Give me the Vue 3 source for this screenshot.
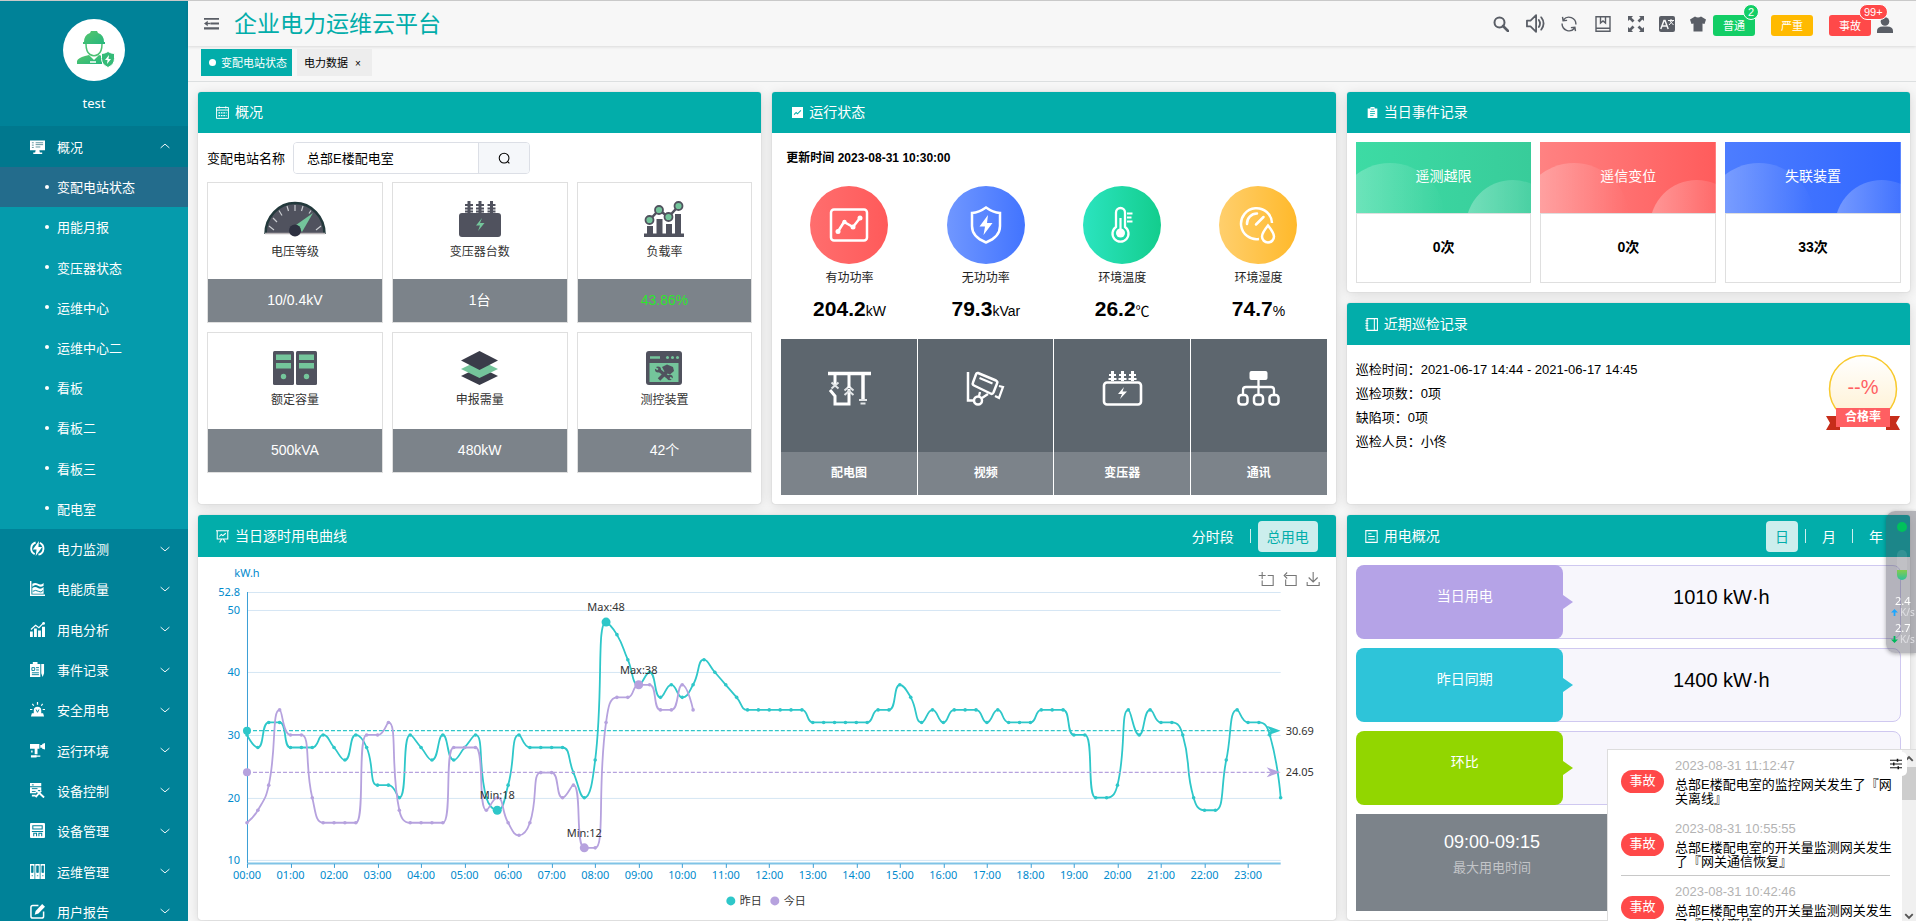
<script setup>
import { computed, ref } from 'vue'

const icons = {
  fold: '<path d="M0 2h16v2H0zM7 7h9v2H7zM0 12h16v2.500H0zM0 8l4-3v6z" fill="currentColor"/><path d="M3 8h4" stroke="currentColor" stroke-width="1.500"/>',
  search: '<circle cx="6.500" cy="6.500" r="5" fill="none" stroke="currentColor" stroke-width="2"/><path d="M10 10l5 5" stroke="currentColor" stroke-width="2.600" stroke-linecap="round"/>',
  lens: '<circle cx="7.500" cy="7.500" r="6" fill="none" stroke="currentColor" stroke-width="1.300"/><path d="M11.500 11.500l2.500 2.500" stroke="currentColor" stroke-width="1.300"/>',
  sound: '<path d="M.8 5.500h3L8.500 1v14l-4.700-4.500h-3z" fill="none" stroke="currentColor" stroke-width="1.500" stroke-linejoin="round"/><path d="M10.800 5q2 3 0 6M12.800 2.800q4 5.200 0 10.400" fill="none" stroke="currentColor" stroke-width="1.500" stroke-linecap="round"/>',
  refresh: '<path d="M2.500 3.800A7 7 0 0 1 14.900 8.500M13.500 12.200A7 7 0 0 1 1.100 7.500M1.500 .8l.6 4 4-.4M14.500 15.200l-.6-4-4 .4" fill="none" stroke="currentColor" stroke-width="1.400"/>',
  book: '<path d="M1 .7h14v14.600H1zM1 12.300h14M5.500 1v6L8 5l2.500 2V1" fill="none" stroke="currentColor" stroke-width="1.400"/>',
  full: '<path d="M0 0h5L3.500 1.700l3 2.800-2 2-2.800-3L0 5zM16 0v5l-1.700-1.500-2.800 3-2-2 3-2.800L11 0zM0 16v-5l1.700 1.500 2.800-3 2 2-3 2.800L5 16zM16 16h-5l1.500-1.700-3-2.800 2-2 2.800 3L16 11z" fill="currentColor"/>',
  lang: '<rect width="16" height="16" rx="2" fill="currentColor"/><path d="M1.800 13L5 4.500h1L9.200 13M3 10h5" fill="none" stroke="#f7f7f7" stroke-width="1.500"/><path d="M9 4.500h6M12 3v1.500M10 9l4-4.500M14.500 9l-4-4.500" stroke="#f7f7f7" stroke-width="1" fill="none"/>',
  shirt: '<path d="M5 .5q3 2 6 0l5 3-1.500 4.500-2-.5V15.500h-9V7.500l-2 .5L0 3.500z" fill="currentColor"/>',
  user: '<circle cx="8" cy="4.500" r="4.300" fill="currentColor"/><path d="M0 16v-2q0-4.500 6-4.500h4q6 0 6 4.500v2z" fill="currentColor"/>',
  up: '<path d="M1 11L8 5l7 6" fill="none" stroke="currentColor" stroke-width="1.500"/>',
  down: '<path d="M1 5l7 6 7-6" fill="none" stroke="currentColor" stroke-width="1.500"/>',
  monitor: '<path d="M0 1.500h16v10.500H0zM6 12h4l.5 2.500H13V16H3.500v-1.500h2z" fill="currentColor"/><path d="M2 4h2M2 6.500h2M2 9h2M6 4h8M6 6h8M6 8.500h5" stroke="#5a8f9a" stroke-width="1"/>',
  power: '<path d="M6 1.600A6.700 6.700 0 0 0 5 14M10.500 2A6.700 6.700 0 0 1 9 14.600" fill="none" stroke="currentColor" stroke-width="2"/><path d="M9.500 0L3 9h4l-1 7 7-9.500H9z" fill="currentColor"/>',
  quality: '<path d="M0 0v16h16v-1.500H1.500V0z" fill="currentColor"/><path d="M2.500 3q3-2 6 0t6-1v3q-3 2-6 0t-6 1zM2.500 7.500q3-2 6 0t6-1v7h-12z" fill="currentColor"/><path d="M3 11q3-2 6 0t5-1" stroke="#00829a" fill="none"/>',
  bars: '<path d="M0 10h3v6H0zM4.300 7h3v9h-3zM8.600 9h3v7h-3zM12.800 5H16v11h-3.200z" fill="currentColor"/><path d="M1 8l5-4.500L9.500 6 14.500 1" fill="none" stroke="currentColor" stroke-width="1.300"/><circle cx="14.500" cy="1.500" r="1.500" fill="currentColor"/>',
  record: '<path d="M0 2h3V0h5v2h3v14H0zM12 2h3v10l-1.500 4L12 12z" fill="currentColor"/><path d="M2 6h3v3H2zM6.500 6h3M6.500 8.500h3M2 11.500h7.500M2 13.500h7.500" fill="none" stroke="#00829a" stroke-width="1"/>',
  alarm: '<path d="M4 12V9q0-4 4-4t4 4v3h2l1 3.500H1L2 12z" fill="currentColor"/><path d="M8 0v3M2.500 2l1.500 2M13.500 2L12 4M0 8h2.500M13.500 8H16" stroke="currentColor" stroke-width="1.300"/><path d="M6.500 8l1.500 3 1.500-3" stroke="#00829a" fill="none"/>',
  camera: '<path d="M0 1h10v5H0zM11 2h2v3h-2zM13 1l3-1v7l-3-1zM5 6h3v6H5zM1 13h6v2.500H1z" fill="currentColor"/><path d="M2 8v2M5 14h6" stroke="currentColor" stroke-width="1.500"/>',
  control: '<path d="M0 0h12v3.500H0zM0 4.500h12v3H8L6.500 11H0z" fill="currentColor"/><path d="M6 15l6-7M7 8l8 7.500M2 13.500h4" stroke="currentColor" stroke-width="2"/><path d="M2 2h2M2 6h6M2 9h4" stroke="#00829a"/>',
  manage: '<rect width="16" height="16" rx="1" fill="currentColor"/><path d="M3 3h10v3.500H3zM2 9h12M4 14v-3h3v3M9.500 14v-3h3v3" fill="none" stroke="#00829a" stroke-width="1.100"/>',
  files: '<path d="M0 0h4.800v16H0zM5.600 0h4.800v16H5.600zM11.200 0H16v16h-4.800z" fill="currentColor"/><path d="M1.500 2h1.800v7H1.500zM7.100 2h1.800v7H7.100zM12.700 2h1.800v7h-1.800zM1.700 12.500h1.500M7.300 12.500h1.500M12.900 12.500h1.500" fill="#00829a" stroke="#00829a" stroke-width=".8"/>',
  edit: '<path d="M9 1.500H3Q1 1.500 1 3.500v9.500q0 2 2 2h9.500q2 0 2-2V8" fill="none" stroke="currentColor" stroke-width="1.600"/><path d="M5 11.500l1-4L13 0l3 3-7 7z" fill="currentColor"/>',
  hList: '<path d="M.7 1.800h14.600v13.500H.7zM.7 5h14.600M4 .5v2.500M12 .5v2.500" fill="none" stroke="currentColor" stroke-width="1.200"/><path d="M3 8.500h10M3 11.800h10" stroke="currentColor" stroke-dasharray="2 1" stroke-width="1.400"/>',
  hChart: '<path d="M0 0h16v16H0z" fill="currentColor"/><path d="M3 11l3-3 2 2 5-5" fill="none" stroke="#02adaa" stroke-width="1.500"/>',
  hClip: '<path d="M1 2h4V0h6v2h4v14H1z" fill="currentColor"/><path d="M4.500 6.500h7M4.500 9.500h7M4.500 12.500h5M6 3h4" stroke="#02adaa" stroke-width="1.200"/>',
  hNote: '<path d="M2.500 .8h12.800v14.400H2.500zM11.500 1v14M.5 3.500h3.500M.5 6.500h3.500M.5 9.500h3.500M.5 12.500h3.500" fill="none" stroke="currentColor" stroke-width="1.300"/>',
  hBoard: '<path d="M0 1h16M1.500 1v10h13V1M4.500 15.500L7 11M11.500 15.500L9 11M4 8l2.500-2.500 2 1.500L12 4" fill="none" stroke="currentColor" stroke-width="1.300"/>',
  hDoc: '<path d="M1 .8h14v14.400H1zM4 4.500h4M4 8h8M4 11.500h8" fill="none" stroke="currentColor" stroke-width="1.300"/>',
  filter: '<path d="M0 3h16M0 8h16M0 13h16" stroke="#111" stroke-width="1.300"/><path d="M10 1v4M5 6v4M11 11v4" stroke="#111" stroke-width="2"/>'
}

const openMenu = {
  label: '概况',
  items: ['变配电站状态', '用能月报', '变压器状态', '运维中心', '运维中心二', '看板', '看板二', '看板三', '配电室']
}
const activeItem = ref('变配电站状态')
const menus = [
  { label: '电力监测', icon: 'power' },
  { label: '电能质量', icon: 'quality' },
  { label: '用电分析', icon: 'bars' },
  { label: '事件记录', icon: 'record' },
  { label: '安全用电', icon: 'alarm' },
  { label: '运行环境', icon: 'camera' },
  { label: '设备控制', icon: 'control' },
  { label: '设备管理', icon: 'manage' },
  { label: '运维管理', icon: 'files' },
  { label: '用户报告', icon: 'edit' }
]
const tools = [
  { icon: 'search', name: '搜索' },
  { icon: 'sound', name: '声音' },
  { icon: 'refresh', name: '刷新' },
  { icon: 'book', name: '手册' },
  { icon: 'full', name: '全屏', tight: true },
  { icon: 'lang', name: '语言', tight: true },
  { icon: 'shirt', name: '主题', tight: true }
]
const alarms = [
  { label: '普通', kind: 'green', count: '2' },
  { label: '严重', kind: 'yellow', count: '' },
  { label: '事故', kind: 'red', count: '99+' }
]

const station = ref('总部E楼配电室')

const overview = [
  {
    label: '电压等级', value: '10/0.4kV', w: 62, h: 36,
    art: '<path d="M1 33A30 31 0 0 1 61 33z" fill="#50525e"/><path d="M1.500 33A29.500 31 0 0 1 60.500 33" fill="none" stroke="#23393c" stroke-width="2.500"/><path d="M5 25l5 4M9 17l4 4M15 9.500l3 5M23 5l1.500 5M31 4v6M39 5l-1.500 5M57 25l-5 4M47 9.500l-2 3" stroke="#c9ccd0" stroke-width="1.200"/><path d="M1 32.500h60" stroke="#b9b4b6" stroke-width="1.500"/><path d="M32 24L49 12 38 31z" fill="#74c59b"/><circle cx="31" cy="29.500" r="6" fill="#2e3141"/>'
  },
  {
    label: '变压器台数', value: '1台', w: 42, h: 36,
    art: '<rect y="12" width="42" height="24" rx="3" fill="#50525e"/><path d="M10 0v12M21 0v12M32.500 0v12" stroke="#50525e" stroke-width="3"/><path d="M6 4h8M6 7.500h8M6 10.500h8M17 4h8M17 7.500h8M17 10.500h8M28.500 4h8M28.500 7.500h8M28.500 10.500h8" stroke="#50525e" stroke-width="2"/><path d="M23 17l-6 7.500h4L19 30l6.500-8H21z" fill="#74c59b"/>'
  },
  {
    label: '负载率', value: '43.86%', good: true, w: 40, h: 36,
    art: '<path d="M0 32.500h40V36H0zM3 25h6v8H3zM12.500 18h6v15h-6zM22 23h6v10h-6zM31 13h6v20h-6z" fill="#50525e"/><path d="M5.500 19L15 9l9.500 7L34.500 5" fill="none" stroke="#50525e" stroke-width="2.500"/><g fill="#74c59b" stroke="#50525e" stroke-width="1.800"><circle cx="5.500" cy="19" r="4"/><circle cx="15" cy="9" r="4"/><circle cx="24.500" cy="16" r="4"/><circle cx="34.500" cy="5" r="4"/></g>'
  },
  {
    label: '额定容量', value: '500kVA', w: 44, h: 34,
    art: '<rect width="21" height="34" rx="1.500" fill="#50525e"/><rect x="23" width="21" height="34" rx="1.500" fill="#50525e"/><path d="M3 3.500h15V9H3zM3 12h15v5.500H3zM26 3.500h15V9H26zM26 12h15v5.500H26z" fill="#74c59b"/><circle cx="10.500" cy="25.500" r="2.700" fill="#74c59b"/><circle cx="33.500" cy="25.500" r="2.700" fill="#74c59b"/>'
  },
  {
    label: '申报需量', value: '480kW', w: 37, h: 34,
    art: '<path d="M0 25l18.500-9L37 25l-18.500 9z" fill="#3a3c49"/><path d="M0 18l18.500-9L37 18l-18.500 9z" fill="#74c59b"/><path d="M0 9.500L18.500 0 37 9.500 18.500 19z" fill="#3a3c49"/>'
  },
  {
    label: '测控装置', value: '42个', w: 36, h: 34,
    art: '<rect width="36" height="34" rx="3" fill="#50525e"/><path d="M3.500 12h29v19h-29z" fill="#74c59b"/><path d="M4 6.500h10" stroke="#74c59b" stroke-width="2.500"/><g fill="#74c59b"><circle cx="21.500" cy="6.500" r="1.500"/><circle cx="26.500" cy="6.500" r="1.500"/><circle cx="31.500" cy="6.500" r="1.500"/></g><path d="M13 28.500l9-9M11 17.500l13 10.500" stroke="#50525e" stroke-width="3.500"/><path d="M16 16l5-2.500 6 2.500 1 4-4 3.500-5-2z" fill="#50525e"/><circle cx="12" cy="18.500" r="3" fill="#50525e"/><circle cx="24" cy="26.500" r="2.800" fill="#50525e"/><path d="M8 16l4 2.500M27.500 29L24 26.500" stroke="#74c59b" stroke-width="1.800"/>'
  }
]

const running = [
  { label: '有功功率', value: '204.2', unit: 'kW', kind: 'c-red', art: '<rect x="21" y="23.500" width="36" height="31" rx="3" fill="none" stroke="#fff" stroke-width="2.500"/><path d="M28 45.500l6-9.500 9 5 7-9" fill="none" stroke="#fff" stroke-width="2.500"/><g fill="#fff"><circle cx="28" cy="45.500" r="2.500"/><circle cx="34.500" cy="36" r="2.200"/><circle cx="43" cy="41" r="2.500"/><circle cx="50" cy="32" r="2.500"/></g>' },
  { label: '无功功率', value: '79.3', unit: 'kVar', kind: 'c-blue', art: '<path d="M39 21.500q7 5 14 5.500v13q0 11-14 16.500-14-5.500-14-16.500V27q7-.5 14-5.500z" fill="none" stroke="#fff" stroke-width="2.500"/><path d="M41 29l-8.500 11.500H38L36.500 49 45.500 37H40z" fill="#fff"/>' },
  { label: '环境温度', value: '26.2', unit: '℃', kind: 'c-green', art: '<path d="M33 41V26.500a4.500 4.500 0 0 1 9 0V41a8 8 0 1 1-9 0z" fill="none" stroke="#fff" stroke-width="2.300"/><circle cx="37.500" cy="47" r="4.500" fill="#fff"/><path d="M37.500 32v14" stroke="#fff" stroke-width="2.200"/><path d="M44 27.500h5.500M44 31.500h4.500M44 35.500h5.500" stroke="#fff" stroke-width="2.200"/>' },
  { label: '环境湿度', value: '74.7', unit: '%', kind: 'c-gold', art: '<path d="M53 37A15.500 15.500 0 1 0 40 53" fill="none" stroke="#fff" stroke-width="2.500"/><path d="M28 38a10 10 0 0 1 10-10.500M44.500 31L37 38.500" fill="none" stroke="#fff" stroke-width="2.500" stroke-linecap="round"/><path d="M49 39.500q6 7.500 6 11a6 6 0 0 1-12 0q0-3.500 6-11z" fill="none" stroke="#fff" stroke-width="2.500"/>' }
]

const shortcuts = [
  { label: '配电图', art: '<path d="M0 2.500h43" stroke="#fff" stroke-width="3.500"/><path d="M7 3v11M2 19l5 6v8h14V18" fill="none" stroke="#fff" stroke-width="3"/><path d="M35 3v25" stroke="#fff" stroke-width="3.500"/><path d="M3.500 11.500l7 6M10.500 11.500l-7 6M16.500 19.500l4.500-4 4.500 4M16.500 24l4.500-4 4.500 4M31 29h8M32.500 32.500h5" fill="none" stroke="#e3e6e8" stroke-width="2"/><path d="M21 3v14" stroke="#fff" stroke-width="3"/>' },
  { label: '视频', art: '<path d="M4 1v28.500h6" fill="none" stroke="#fff" stroke-width="2.500"/><circle cx="14" cy="29.500" r="4" fill="none" stroke="#fff" stroke-width="2.500"/><path d="M15 25l1-4M18 27l6-4" stroke="#fff" stroke-width="2.300"/><path d="M14 2L32 9.500q2 1 1 3l-3.500 9q-1 2-3 1L10 14.500q-2-1-1-3L12 3.500q.5-2 2-1.500z" fill="none" stroke="#fff" stroke-width="2.500"/><path d="M15.500 7l13 5.500M35 15l4 1-4 11-4-2" fill="none" stroke="#fff" stroke-width="2.200"/>' },
  { label: '变压器', art: '<rect x="3" y="11.500" width="37" height="22" rx="3" fill="none" stroke="#fff" stroke-width="2.600"/><path d="M11.500 0v10M21.500 0v10M31.500 0v10" stroke="#fff" stroke-width="3"/><path d="M8 4h7M7.500 8h8M18 4h7M17.500 8h8M28 4h7M27.500 8h8" stroke="#fff" stroke-width="2.200"/><path d="M23 16l-6 7h4l-2 5 7-7.500h-4.500z" fill="#fff"/>' },
  { label: '通讯', art: '<rect x="12.500" y="0" width="18" height="9" rx="2" fill="#fff"/><path d="M21.500 8v16M6 24v-5q0-3 3-3h25q3 0 3 3v5" fill="none" stroke="#fff" stroke-width="2.300"/><g fill="none" stroke="#fff" stroke-width="2.500"><rect x="1.500" y="24" width="9" height="9.500" rx="3"/><rect x="17" y="24" width="9" height="9.500" rx="3"/><rect x="32.500" y="24" width="9" height="9.500" rx="3"/></g>' }
]

const events = [
  { label: '遥测越限', value: '0次', from: '#3ddba4', to: '#38cc9a' },
  { label: '遥信变位', value: '0次', from: '#ff8282', to: '#ff5c5c' },
  { label: '失联装置', value: '33次', from: '#4d7dff', to: '#3066ff' }
]

const inspection = [
  '巡检时间：2021-06-17 14:44 - 2021-06-17 14:45',
  '巡检项数：0项',
  '缺陷项：0项',
  '巡检人员：小佟'
]

const usage = [
  { label: '当日用电', value: '1010 kW·h', kind: 'u-purple' },
  { label: '昨日同期', value: '1400 kW·h', kind: 'u-cyan' },
  { label: '环比', value: '', kind: 'u-lime' }
]

const notices = [
  { time: '2023-08-31 11:12:47', text: '总部E楼配电室的监控网关发生了『网关离线』' },
  { time: '2023-08-31 10:55:55', text: '总部E楼配电室的开关量监测网关发生了『网关通信恢复』', line: true },
  { time: '2023-08-31 10:42:46', text: '总部E楼配电室的开关量监测网关发生了『网关离线』' }
]

const yesterday = [
  30, 28, 32, 32, 28, 28, 28, 30, 28, 26, 30, 28, 22, 22, 20, 30, 28, 26, 30, 26, 28, 30, 20, 18,
  22, 30, 28, 28, 28, 28, 24, 20, 26, 48, 46, 42, 38, 40, 36, 38, 36, 38, 42, 40, 38, 36, 34, 34,
  34, 34, 34, 34, 32, 32, 32, 32, 32, 32, 34, 34, 38, 36, 32, 34, 32, 34, 34, 34, 32, 34, 32, 32,
  32, 34, 34, 34, 30, 30, 20, 20, 22, 34, 30, 34, 32, 32, 30, 20, 18, 18, 26, 34, 32, 32, 30, 20
]
const today = [
  16, 18, 22, 34, 30, 30, 20, 16, 16, 16, 16, 30, 30, 32, 18, 16, 16, 16, 16, 28, 28, 28, 18, 20,
  16, 14, 16, 24, 24, 20, 22, 12, 12, 32, 36, 36, 38, 38, 34, 34, 38, 34
]

const plot = { left: 49, right: 1083, top: 35, bottom: 306, min: 9.6, max: 52.8 }
const px = (i) => plot.left + (i * (plot.right - plot.left)) / 95
const py = (v) => plot.bottom - ((v - plot.min) * (plot.bottom - plot.top)) / (plot.max - plot.min)
const toPoints = (values) => values.map((v, i) => [px(i), py(v)])
const clamp = (v, a, b) => Math.min(Math.max(v, Math.min(a, b)), Math.max(a, b))

function smoothPath(pts) {
  const s = 0.5
  let d = `M${pts[0][0]} ${pts[0][1]}`
  let c0 = pts[0]
  for (let i = 1; i < pts.length; i++) {
    const [x, y] = pts[i]
    const [ox, oy] = pts[i - 1]
    let c1 = [x, y]
    let n0 = [x, y]
    if (i < pts.length - 1) {
      const [nx, ny] = pts[i + 1]
      const lp = Math.hypot(x - ox, y - oy)
      const ln = Math.hypot(nx - x, ny - y)
      const r = ln / (ln + lp)
      const vx = nx - ox
      const vy = ny - oy
      n0 = [clamp(x + vx * s * r, nx, x), clamp(y + vy * s * r, ny, y)]
      c1 = [
        clamp(x - ((n0[0] - x) * lp) / ln, ox, x),
        clamp(y - ((n0[1] - y) * lp) / ln, oy, y)
      ]
      n0 = [x + ((x - c1[0]) * ln) / lp, y + ((y - c1[1]) * ln) / lp]
    }
    d += `C${c0[0]} ${c0[1]} ${c1[0]} ${c1[1]} ${x} ${y}`
    c0 = n0
  }
  return d
}

const series = computed(() => [
  { name: '昨日', color: '#2ec7c9', pts: toPoints(yesterday), avg: 30.69, marks: [['Max:48', 33, 48], ['Min:18', 23, 18]] },
  { name: '今日', color: '#b6a2de', pts: toPoints(today), avg: 24.05, marks: [['Max:38', 36, 38], ['Min:12', 31, 12]] }
])
const yTicks = [52.8, 50, 40, 30, 20, 10]
const hours = Array.from({ length: 24 }, (_, h) => `${String(h).padStart(2, '0')}:00`)
</script>

<template>
  <div class="page">
    <aside class="side">
      <div class="profile">
        <svg class="avatar" viewBox="0 0 62 62" role="img" aria-label="头像">
          <defs>
            <linearGradient id="worker" x1="0" y1="0" x2="1" y2="1">
              <stop offset="0" stop-color="#57c56c" /><stop offset="1" stop-color="#25b77e" />
            </linearGradient>
          </defs>
          <circle cx="31" cy="31" r="31" fill="#fff" />
          <path d="M20 25v-2h1q0-7 6-9l1-2h6l1 2q6 2 6 9h1v2z" fill="url(#worker)" />
          <path d="M23 25q0 8 4 10.500t8 0q4-2.500 4-10.500" fill="none" stroke="#4cc274" stroke-width="1.500" />
          <path d="M14 45v-3q1-3 8-5l4-1 5 5 5-5 3 1v8z" fill="url(#worker)" />
          <path d="M27 43h6" stroke="#fff" stroke-width="1.500" />
          <path d="M45 32.500q3 2 6.500 2v5q0 6-6.500 9-6.500-3-6.500-9v-5q3.500 0 6.500-2z" fill="#35bb78" stroke="#fff" stroke-width="1" />
          <path d="M46 36l-4 5h2.500l-.5 4 4-5h-2.500z" fill="#fff" />
        </svg>
        <span class="user-name">test</span>
      </div>
      <nav>
        <a class="menu open" href="#">
          <svg class="menu-icon" viewBox="0 0 16 16" v-html="icons.monitor"></svg>
          <span>{{ openMenu.label }}</span>
          <svg class="caret" viewBox="0 0 16 16" v-html="icons.up"></svg>
        </a>
        <div class="sub">
          <a v-for="item in openMenu.items" :key="item" href="#" :class="{ active: item === activeItem }" @click.prevent="activeItem = item">
            {{ item }}
          </a>
        </div>
        <div class="rest">
          <a v-for="m in menus" :key="m.label" class="menu" href="#">
            <svg class="menu-icon" viewBox="0 0 16 16" v-html="icons[m.icon]"></svg>
            <span>{{ m.label }}</span>
            <svg class="caret" viewBox="0 0 16 16" v-html="icons.down"></svg>
          </a>
        </div>
      </nav>
    </aside>

    <div class="main">
      <header class="top">
        <button class="fold" aria-label="收起菜单"><svg viewBox="0 0 16 16" v-html="icons.fold"></svg></button>
        <h1>企业电力运维云平台</h1>
        <div class="tools">
          <button v-for="t in tools" :key="t.icon" class="tool" :class="{ tight: t.tight }" :aria-label="t.name">
            <svg :class="{ wide: t.icon === 'sound' }" viewBox="0 0 16 16" v-html="icons[t.icon]"></svg>
          </button>
          <div class="alarms">
            <button v-for="a in alarms" :key="a.label" class="alarm" :class="a.kind">
              {{ a.label }}<span v-if="a.count" class="count" :class="a.kind">{{ a.count }}</span>
            </button>
          </div>
          <button class="account" aria-label="用户"><svg viewBox="0 0 16 16" v-html="icons.user"></svg></button>
        </div>
      </header>

      <div class="tabs">
        <a class="tab on" href="#"><i class="dot"></i>变配电站状态</a>
        <a class="tab" href="#">电力数据<b class="close">×</b></a>
      </div>

      <main class="content">
        <section class="card">
          <div class="head"><svg viewBox="0 0 16 16" v-html="icons.hList"></svg><h2>概况</h2></div>
          <div class="body">
            <div class="query">
              <label for="station">变配电站名称</label>
              <div class="field">
                <input id="station" v-model="station" type="text" />
                <button aria-label="查询"><svg viewBox="0 0 16 16" v-html="icons.lens"></svg></button>
              </div>
            </div>
            <div class="tiles">
              <div v-for="o in overview" :key="o.label" class="tile">
                <div class="tile-top">
                  <svg :width="o.w" :height="o.h" :viewBox="`0 0 ${o.w} ${o.h}`" v-html="o.art"></svg>
                  <span>{{ o.label }}</span>
                </div>
                <div class="tile-value" :class="{ good: o.good }">{{ o.value }}</div>
              </div>
            </div>
          </div>
        </section>

        <section class="card">
          <div class="head"><svg class="small" viewBox="0 0 16 16" v-html="icons.hChart"></svg><h2>运行状态</h2></div>
          <div class="body run">
            <p class="updated">更新时间 2023-08-31 10:30:00</p>
            <div class="gauges">
              <div v-for="r in running" :key="r.label" class="gauge">
                <div class="disc" :class="r.kind"><svg viewBox="0 0 78 78" v-html="r.art"></svg></div>
                <span>{{ r.label }}</span>
                <p><b>{{ r.value }}</b>{{ r.unit }}</p>
              </div>
            </div>
            <div class="shortcuts">
              <button v-for="s in shortcuts" :key="s.label">
                <span class="pic"><svg viewBox="0 0 43 35" v-html="s.art"></svg></span>
                <span class="cap">{{ s.label }}</span>
              </button>
            </div>
          </div>
        </section>

        <div class="stack">
          <section class="card">
            <div class="head"><svg class="small" viewBox="0 0 16 16" v-html="icons.hClip"></svg><h2>当日事件记录</h2></div>
            <div class="body events">
              <div v-for="(e, i) in events" :key="e.label" class="event">
                <div class="event-top">
                  <svg viewBox="0 0 176 71" preserveAspectRatio="none" aria-hidden="true">
                    <defs>
                      <linearGradient :id="`ev${i}`"><stop offset="0" :stop-color="e.from" /><stop offset="1" :stop-color="e.to" /></linearGradient>
                      <linearGradient :id="`bub${i}`"><stop offset="0" stop-color="#fff" stop-opacity=".3" /><stop offset="1" stop-color="#fff" stop-opacity="0" /></linearGradient>
                    </defs>
                    <rect width="176" height="71" :fill="`url(#ev${i})`" />
                    <circle cx="34" cy="76" r="55" :fill="`url(#bub${i})`" />
                    <circle cx="157" cy="85" r="47" :fill="`url(#bub${i})`" />
                  </svg>
                  <span>{{ e.label }}</span>
                </div>
                <div class="event-value">{{ e.value }}</div>
              </div>
            </div>
          </section>
          <section class="card grow">
            <div class="head tall"><svg viewBox="0 0 16 16" v-html="icons.hNote"></svg><h2>近期巡检记录</h2></div>
            <div class="body inspect">
              <div class="lines"><p v-for="l in inspection" :key="l">{{ l }}</p></div>
              <div class="medal">
                <svg viewBox="0 0 76 78" aria-hidden="true">
                  <defs><linearGradient id="medal" x1="0" y1="0" x2="0" y2="1"><stop offset="0" stop-color="#fff" /><stop offset="1" stop-color="#fff0cf" /></linearGradient></defs>
                  <circle cx="38" cy="35" r="33.500" fill="url(#medal)" stroke="#f8c92c" stroke-width="1.500" />
                  <path d="M1 62h14v14H1l4-7zM75 62H61v14h14l-4-7z" fill="#c62d1a" />
                  <rect x="11" y="54" width="54" height="19" fill="#ff5f62" />
                </svg>
                <span class="rate">--%</span>
                <span class="rate-label">合格率</span>
              </div>
            </div>
          </section>
        </div>

        <section class="card wide">
          <div class="head tall">
            <svg viewBox="0 0 16 16" v-html="icons.hBoard"></svg><h2>当日逐时用电曲线</h2>
            <div class="switch"><button>分时段</button><i></i><button class="on">总用电</button></div>
          </div>
          <svg class="chart" viewBox="0 0 1138 362" role="img" aria-label="当日逐时用电曲线">
            <g class="grid"><path v-for="t in yTicks" :key="t" :d="`M49 ${Math.round(py(t))}.500H1083`" /></g>
            <g class="axis-text">
              <text x="49" y="20" text-anchor="middle">kW.h</text>
              <text v-for="t in yTicks" :key="t" x="42" :y="py(t) + 4" text-anchor="end">{{ t }}</text>
              <text v-for="(h, i) in hours" :key="h" :x="px(i * 4)" y="322" text-anchor="middle">{{ h }}</text>
            </g>
            <path class="x-axis" d="M49 306.500H1083" />
            <path class="y-axis" d="M49.500 35V306" />
            <path v-for="(h, i) in hours" :key="h" class="y-axis" :d="`M${Math.round(px(i * 4))}.500 307v4`" />
            <g v-for="s in series" :key="s.name" :fill="s.color" :stroke="s.color">
              <path :d="smoothPath(s.pts)" fill="none" stroke-width="1.800" />
              <circle v-for="(p, i) in s.pts" :key="i" :cx="p[0]" :cy="p[1]" r="1.800" stroke="none" />
              <path :d="`M49 ${py(s.avg)}H1075`" stroke-dasharray="4 2" stroke-width="1.200" />
              <circle cx="49" :cy="py(s.avg)" r="4" stroke="none" />
              <path :d="`M1083 ${py(s.avg)}l-14 -5l4 5l-4 5z`" stroke="none" />
            </g>
            <g v-for="s in series" :key="s.name">
              <g v-for="m in s.marks" :key="m[0]">
                <circle :cx="px(m[1])" :cy="py(m[2])" r="4.500" :fill="s.color" />
                <text class="mark" :x="px(m[1])" :y="py(m[2]) - 11" text-anchor="middle">{{ m[0] }}</text>
              </g>
              <text class="mark" x="1088" :y="py(s.avg) + 4">{{ s.avg }}</text>
            </g>
            <g fill="none" stroke="#777" stroke-width="1.100">
              <path d="M1064.500 15v7M1061 18.500h7M1070 18.500h5.500v10h-11v-5" />
              <path d="M1088 18.500h10.500v10h-10.500v-6M1089.500 15.500l-3 3 3 3" />
              <path d="M1115.500 15v10M1111 20.500l4.500 4.500 4.500-4.500M1109.500 25v3.500h12V25" />
            </g>
            <g class="legend">
              <circle cx="533" cy="344" r="4.500" fill="#2ec7c9" /><text x="542" y="348">昨日</text>
              <circle cx="577" cy="344" r="4.500" fill="#b6a2de" /><text x="586" y="348">今日</text>
            </g>
          </svg>
        </section>

        <section class="card">
          <div class="head tall">
            <svg viewBox="0 0 16 16" v-html="icons.hDoc"></svg><h2>用电概况</h2>
            <div class="switch"><button class="on">日</button><i></i><button>月</button><i></i><button>年</button></div>
          </div>
          <div class="body usage">
            <div v-for="u in usage" :key="u.label" class="use">
              <div class="use-label" :class="u.kind">{{ u.label }}</div>
              <div class="use-value">{{ u.value }}</div>
            </div>
            <div class="peaks">
              <div><b>09:00-09:15</b><span>最大用电时间</span></div>
            </div>
          </div>
        </section>
      </main>
    </div>

    <aside class="popup">
      <div class="notices">
        <div v-for="n in notices" :key="n.time" class="notice" :class="{ line: n.line }">
          <span class="pill">事故</span>
          <div><time>{{ n.time }}</time><p>{{ n.text }}</p></div>
        </div>
      </div>
      <div class="bar">
        <svg viewBox="0 0 16 16"><path d="M2 11l6-6 6 6" fill="none" stroke="#555" stroke-width="3" /></svg>
        <i></i>
        <svg class="end" viewBox="0 0 16 16"><path d="M2 5l6 6 6-6" fill="none" stroke="#555" stroke-width="3" /></svg>
      </div>
      <button class="filter" aria-label="筛选"><svg viewBox="0 0 16 16" v-html="icons.filter"></svg></button>
    </aside>

    <div class="netmeter">
      <i class="lamp"></i>
      <i class="level"></i>
      <div class="rate-row"><b>2.4</b><span><svg viewBox="0 0 8 8"><path d="M4 0L0 4h3v4h2V4h3z" fill="#1ea7ff" /></svg>K/s</span></div>
      <div class="rate-row"><b>2.7</b><span><svg viewBox="0 0 8 8"><path d="M4 8L0 4h3V0h2v4h3z" fill="#00b85c" /></svg>K/s</span></div>
    </div>
  </div>
</template>

<style>
body { overflow: hidden; }
</style>

<style scoped>
* { box-sizing: border-box; }
.page {
  display: flex;
  height: 100vh;
  overflow: hidden;
  font-family: "Liberation Sans", "Noto Sans CJK SC", sans-serif;
  font-size: 13px;
  color: #000;
  background: #f7f7f7;
  border-top: 1px solid #c9c9c9;
}
p, h1, h2 { margin: 0; font-weight: normal; }
a { text-decoration: none; color: inherit; }
button { font: inherit; color: inherit; border: 0; background: none; padding: 0; cursor: pointer; }
svg { display: block; flex: none; }

.side { flex: 0 0 188px; background: #008298; color: #fff; overflow: hidden; }
.profile { height: 125px; padding-top: 18px; display: flex; flex-direction: column; align-items: center; gap: 12px; }
.avatar { width: 62px; height: 62px; }
.user-name { font-family: "Noto Sans", sans-serif; font-size: 13px; line-height: 20px; }
.menu { display: flex; align-items: center; padding: 0 18px 1px 30px; }
.menu span { flex: 1; margin-left: 12px; }
.menu-icon { width: 15px; height: 15px; }
.caret { width: 10px; height: 10px; }
.menu.open { height: 41px; background: #00788e; }
.sub { display: grid; grid-auto-rows: 1fr; height: 362px; background: #059bac; }
.sub a { display: flex; align-items: center; padding: 0 0 1px 45px; gap: 8px; }
.sub a::before { content: ""; width: 4px; height: 4px; border-radius: 50%; background: #fff; }
.sub a.active { background: #236c8c; }
.rest { display: grid; grid-auto-rows: 1fr; height: 403px; }

.main { flex: 1; min-width: 0; }
.top { display: flex; align-items: center; height: 45px; padding: 0 23px 0 16px; box-shadow: 0 1px 3px rgba(0, 0, 0, .12); color: #5a5e66; }
.fold svg { width: 15px; height: 15px; }
.top h1 { margin-left: 15px; font-size: 23px; line-height: 34px; color: #02adaa; }
.tools { display: flex; align-items: center; margin-left: auto; }
.tool { width: 34px; display: flex; justify-content: center; }
.tool.tight { width: 31px; }
.tool svg { width: 16px; height: 16px; }
.tool svg.wide { width: 19px; height: 19px; }
.alarms { display: flex; gap: 16px; padding-top: 3px; }
.alarm { position: relative; width: 42px; height: 21px; border-radius: 3px; color: #fff; font-size: 11px; }
.green { background: #13ce66; }
.yellow { background: #ffba00; }
.red { background: #ff4949; }
.count { position: absolute; left: 30px; top: -11px; min-width: 16px; height: 16px; padding: 0 4px; border: 1px solid #fff; border-radius: 8px; font-size: 11px; line-height: 14px; }
.account { margin-left: 6px; padding-top: 2px; }
.account svg { width: 16px; height: 16px; }

.tabs { display: flex; gap: 5px; height: 36px; padding: 3px 13px 0; border-bottom: 1px solid #dcdfe0; }
.tab { display: flex; align-items: center; height: 27px; padding: 0 7px 1px; font-size: 11px; background: #ededed; }
.tab.on { background: #02adaa; color: #fff; padding: 0 5px 1px 8px; }
.dot { width: 7px; height: 7px; margin-right: 5px; border-radius: 50%; background: #fff; }
.close { margin: 2px 4px 0 7px; font-weight: normal; font-size: 10px; }

.content { display: grid; grid-template-columns: repeat(3, minmax(0, 1fr)); gap: 11px; padding: 10px 6px 0 10px; }
.card { background: #fff; border-radius: 3px; overflow: hidden; box-shadow: 0 2px 12px rgba(0, 0, 0, .13), 0 0 1px rgba(0, 0, 0, .3); }
.wide { grid-column: span 2; }
.stack { display: flex; flex-direction: column; gap: 11px; }
.grow { flex: 1; }
.head { display: flex; align-items: center; height: 41px; padding: 0 18px 1px; color: #fff; background: #02adaa; }
.head.tall { height: 42px; padding-bottom: 0; }
.head > svg { width: 13px; height: 13px; margin-right: 6px; }
.head > svg.small { width: 11px; height: 11px; margin: 0 6px 0 2px; }
.head h2 { font-size: 14px; line-height: 20px; }
.body { padding: 9px; }

.query { display: flex; align-items: center; gap: 8px; }
.query label { padding-bottom: 2px; }
.field { display: flex; width: 237px; height: 32px; border: 1px solid #dcdfe6; border-radius: 4px; overflow: hidden; }
.field input { flex: 1; min-width: 0; border: 0; outline: 0; padding: 0 13px 1px; font: inherit; color: #000; }
.field button { width: 51px; display: grid; place-items: center; background: #f5f7fa; border-left: 1px solid #dcdfe6; }
.field svg { width: 13px; height: 13px; }
.tiles { display: grid; grid-template-columns: repeat(3, 1fr); gap: 9px; padding: 8px 0 19px; }
.tile { height: 141px; border: 1px solid #dfdfdf; display: flex; flex-direction: column; }
.tile-top { flex: 1; display: flex; flex-direction: column; align-items: center; padding-top: 18px; gap: 5px; font-size: 12px; line-height: 20px; color: #333; }
.tile-value { height: 43px; line-height: 43px; text-align: center; font-size: 14px; color: #fff; background: #7c838a; }
.tile-value.good { color: #2ce62c; }

.run { padding: 16px 9px 9px; }
.updated { padding-left: 5px; font-size: 12px; line-height: 18px; font-weight: bold; }
.gauges, .shortcuts { display: grid; grid-template-columns: repeat(4, 1fr); }
.gauge { display: flex; flex-direction: column; align-items: center; padding-top: 19px; font-size: 12px; color: #222; }
.gauge span { margin-top: 5px; line-height: 18px; }
.gauge p { margin: 8px 0 14px; font-size: 14px; line-height: 28px; color: #000; }
.gauge b { font-size: 21px; }
.disc { width: 78px; height: 78px; border-radius: 50%; }
.c-red { background: linear-gradient(90deg, #ff6e6e, #ff5a5a); }
.c-blue { background: linear-gradient(90deg, #7097ff, #4274ff); }
.c-green { background: linear-gradient(90deg, #2be4bf, #13cd8d); }
.c-gold { background: linear-gradient(90deg, #ffcf6d, #ffb92b); }
.shortcuts { gap: 1px; }
.shortcuts button { display: flex; flex-direction: column; color: #fff; }
.pic { width: 100%; height: 113px; padding-top: 32px; display: flex; justify-content: center; background: #5d666e; }
.pic svg { width: 43px; height: 35px; }
.cap { width: 100%; line-height: 43px; font-size: 12px; font-weight: bold; background: #7c838a; }

.events { display: grid; grid-template-columns: repeat(3, 1fr); gap: 9px; }
.event { text-align: center; }
.event-top { position: relative; height: 71px; color: #fff; font-size: 14px; line-height: 68px; }
.event-top svg { position: absolute; inset: 0; width: 100%; height: 100%; }
.event-top span { position: relative; }
.event-value { height: 70px; line-height: 66px; border: 1px solid #dfdfdf; font-size: 14px; font-weight: bold; }
.inspect { display: flex; justify-content: space-between; }
.lines { padding-top: 4px; line-height: 24px; }
.medal { position: relative; width: 76px; height: 78px; text-align: center; }
.medal svg { width: 76px; height: 78px; }
.rate { position: absolute; left: 0; right: 0; top: 20px; font-size: 20px; line-height: 26px; color: #ff5f62; }
.rate-label { position: absolute; left: 0; right: 0; top: 54px; font-size: 12px; font-weight: bold; line-height: 19px; color: #fff; }

.switch { margin-left: auto; display: flex; align-items: center; font-size: 14px; }
.switch button { height: 31px; padding: 0 9px; border-radius: 4px; }
.switch button.on { background: #cceeed; color: #02adaa; }
.switch i { width: 1px; height: 14px; margin: 0 7px; background: rgba(255, 255, 255, .8); }

.chart { width: 100%; height: auto; font-family: "Noto Sans", "Noto Sans CJK SC", sans-serif; font-size: 11px; }
.grid path { stroke: #d5e6f4; }
.axis-text { fill: #008acd; }
.x-axis { stroke: #7fc3e6; stroke-width: 2; }
.y-axis { stroke: #3a9fd6; }
.mark { fill: #333; }
.legend { fill: #333; }

.usage { display: flex; flex-direction: column; gap: 9px; padding-top: 8px; }
.use { display: flex; height: 74px; }
.use-label { position: relative; z-index: 1; width: 38%; margin-right: 2%; padding-left: 11px; border-radius: 8px; text-align: center; line-height: 62px; font-size: 14px; color: #fff; }
.use-label::after { content: ""; position: absolute; left: 100%; top: 30px; border: 7px solid transparent; border-left: 10px solid var(--tone); border-right: 0; }
.u-purple { --tone: #b5a3e7; background: #b5a3e7; }
.u-cyan { --tone: #2ec4d9; background: #2ec4d9; }
.u-lime { --tone: #92d600; background: #92d600; }
.use-value { flex: 1; margin-left: -32px; border: 1px solid #cfc8f0; border-radius: 0 8px 8px 0; background: #f7f6fc; text-align: center; line-height: 62px; font-size: 20px; }
.peaks { display: grid; grid-template-columns: 1fr 1fr; height: 97px; background: #7c838a; text-align: center; }
.peaks div { display: flex; flex-direction: column; padding-top: 16px; gap: 4px; }
.peaks b { font-weight: normal; font-size: 18px; line-height: 24px; color: #fff; }
.peaks span { line-height: 20px; color: #c3c5c8; }

.popup { position: fixed; z-index: 5; right: 0; bottom: 0; display: flex; width: 309px; height: 172px; background: #fff; border: 1px solid #ddd; border-right: 0; border-bottom: 0; overflow: hidden; }
.notices { flex: 1; min-width: 0; padding: 6px 12px 0 13px; }
.notice { display: flex; gap: 11px; height: 63px; }
.notice > div { flex: 1; min-width: 0; padding-top: 1px; }
.notice time { display: block; line-height: 18px; color: #b3b3b3; }
.notice p { width: 220px; line-height: 14px; padding-top: 3px; }
.line { position: relative; }
.line::after { content: ""; position: absolute; left: 0; right: 0; bottom: 6px; border-bottom: 1px solid #c8c8c8; }
.pill { flex: none; width: 43px; height: 23px; margin-top: 14px; border-radius: 12px; text-align: center; line-height: 22px; color: #fff; background: #ff4949; }
.bar { flex: none; width: 14px; display: flex; flex-direction: column; background: #f0f0f0; }
.bar svg { width: 10px; height: 10px; margin: 4px 2px 3px; }
.bar i { height: 33px; background: #cdcdcd; }
.bar .end { margin-top: auto; margin-bottom: 0; }
.filter { position: absolute; right: 9px; top: 2px; width: 22px; height: 24px; display: grid; place-items: center; background: #fff; border-radius: 0 5px 5px 0; }
.filter svg { width: 12px; height: 12px; }

.netmeter { position: fixed; z-index: 6; right: 0; top: 511px; width: 30px; height: 142px; padding: 11px 0 0 1px; border-radius: 9px 0 0 9px; background: rgba(70, 72, 84, .38); box-shadow: 0 1px 4px rgba(0, 0, 0, .3); color: #fff; font-family: "Noto Sans", sans-serif; font-size: 11px; }
.lamp, .level { display: block; width: 10px; height: 10px; margin-left: 10px; border-radius: 50%; background: #00c25c; }
.level { height: 30px; margin-top: 18px; margin-bottom: 14px; border-radius: 5px; background: linear-gradient(rgba(255, 255, 255, .1) 66%, #86cc4c 66%, #2fc19c); }
.rate-row { height: 27px; }
.rate-row b { display: block; font-weight: normal; line-height: 14px; padding-left: 8px; }
.rate-row span { display: flex; align-items: center; gap: 2px; line-height: 8px; font-size: 10px; color: #e0e0e4; padding-left: 4px; }
.rate-row svg { width: 7px; height: 7px; }
</style>
